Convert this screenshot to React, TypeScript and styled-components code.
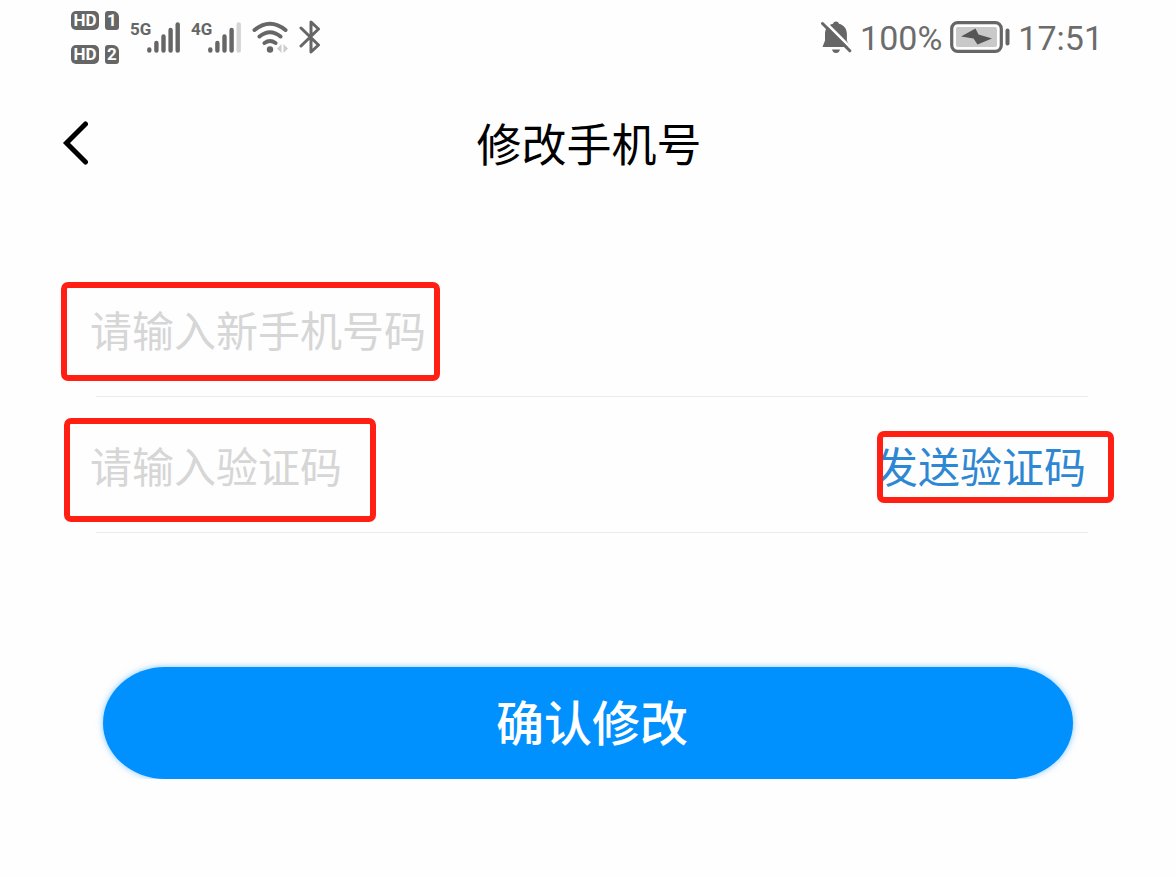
import React from "react";
import styled, { createGlobalStyle } from "styled-components";

const GlobalStyle = createGlobalStyle`
  *, *::before, *::after { box-sizing: border-box; }
  body {
    margin: 0;
    background: #fefefe;
    color: #000;
    font-family: "Noto Sans CJK SC", sans-serif;
  }
  button, input { font-family: inherit; }
`;

const Page = styled.div`
  display: flex;
  flex-direction: column;
`;

const StatusBar = styled.div`
  display: flex;
  justify-content: space-between;
  height: 74px;
  padding: 0 73px 0 71px;
  color: #666;
  font-family: Roboto, sans-serif;
`;

const StatusGroup = styled.div<{ $gap: number }>`
  display: flex;
  align-items: center;
  gap: ${(p) => p.$gap}px;
  svg { display: block; flex: none; }
`;

const SimList = styled.div`
  display: grid;
  gap: 15px;
`;

const SimRow = styled.div`
  display: flex;
  gap: 6px;
`;

const Badge = styled.span<{ $sim?: boolean }>`
  width: ${(p) => (p.$sim ? 14 : 28)}px;
  height: 19px;
  border-radius: ${(p) => (p.$sim ? "3px 6px 3px 3px" : "5px")};
  background: #666;
  color: #fff;
  font-size: 17px;
  font-weight: 700;
  line-height: 19px;
  text-align: center;
`;

const Network = styled.div`
  display: flex;
  align-items: flex-start;
`;

const NetworkType = styled.span`
  width: 17px;
  font-size: 17px;
  font-weight: 700;
  line-height: 14px;
  white-space: nowrap;
`;

const StatusText = styled.span`
  padding-top: 2px;
  color: #6c6c6c;
  font-size: 34px;
  line-height: 40px;
`;

const Header = styled.header`
  display: grid;
  grid-template-columns: 64px 1fr 64px;
  align-items: center;
  height: 138px;
  padding: 0 55px 0 57px;
`;

const BackButton = styled.button`
  display: flex;
  padding: 4px;
  border: 0;
  background: none;
`;

const Title = styled.h1`
  margin: 0;
  font-size: 45px;
  font-weight: 400;
  line-height: 64px;
  text-align: center;
`;

const Form = styled.form`
  display: flex;
  flex-direction: column;
  padding: 49px 88px 0 96px;
`;

const Field = styled.div`
  position: relative;
  display: flex;
  align-items: center;
  height: 136px;
  border-bottom: 1px solid #ebebeb;
`;

const Input = styled.input`
  flex: 1;
  min-width: 0;
  height: 64px;
  margin-left: -6px;
  padding: 0;
  border: 0;
  outline: 0;
  background: transparent;
  color: #333;
  font-size: 42px;
  &::placeholder { color: #d6d6d6; opacity: 1; }
`;

const SendButton = styled.button`
  padding: 0 2px;
  border: 0;
  background: none;
  color: #2d87d3;
  font-size: 42px;
  line-height: 64px;
  white-space: nowrap;
`;

const Mark = styled.span<{ $top: number; $width: number; $height: number; $left?: number; $right?: number }>`
  position: absolute;
  top: ${(p) => p.$top}px;
  ${(p) => (p.$right !== undefined ? `right: ${p.$right}px;` : `left: ${p.$left}px;`)}
  width: ${(p) => p.$width}px;
  height: ${(p) => p.$height}px;
  border: 6px solid #ff2013;
  border-radius: 7px;
  pointer-events: none;
`;

const SubmitButton = styled.button`
  height: 112px;
  margin: 134px 15px 0 7px;
  padding: 0 0 6px 8px;
  border: 0;
  border-radius: 62px / 56px;
  background: #0091ff;
  box-shadow: 0 0 6px rgba(0, 145, 255, 0.5);
  color: #fff;
  font-size: 48px;
  font-weight: 500;
  line-height: 64px;
`;

const Signal = ({ weak }: { weak?: boolean }) => (
  <svg width="33" height="31" viewBox="0 0 33 31" stroke="#666" strokeWidth="4.4" strokeLinecap="round" aria-hidden="true">
    <path d="M2.3 27.5v1M9.4 21v7.5M16.5 14.5v14M23.6 8v20.5" />
    <path d="M30.7 2.5v26" stroke={weak ? "#d4d4d4" : "#666"} />
  </svg>
);

const Wifi = () => (
  <svg width="36" height="33" viewBox="0 0 36 33" fill="none" stroke="#666" strokeWidth="4" strokeLinecap="round" aria-hidden="true">
    <path d="M2.5 9Q18 -3.5 33.5 9M7.5 15.5Q18 7 28.5 15.5M12.500 22Q18 18 23.500 22" />
    <circle cx="18" cy="28.5" r="3.2" fill="#666" stroke="none" />
    <path d="M25 27.500l4.500-4.500v9zM36 27.500l-4.500-4.500v9z" fill="#ccc" stroke="none" />
  </svg>
);

const Bluetooth = () => (
  <svg width="22" height="34" viewBox="0 0 22 34" fill="none" stroke="#666" strokeWidth="3" strokeLinecap="round" strokeLinejoin="round" aria-hidden="true">
    <path d="M2 8L19.5 25L12 32V2L19.5 9L2 26" />
  </svg>
);

const BellOff = () => (
  <svg width="31" height="33" viewBox="0 0 31 33" aria-hidden="true">
    <path d="M15 0.500c1.700 0 2.700 1 2.900 2.200 5.200 1.300 8 5 8 10.300v6.500l3 6.500H1.500L4 19.500V13c0-5.300 2.600-9 8.100-10.300.2-1.200 1.200-2.200 2.900-2.200z" fill="#666" />
    <path d="M11 28.500h8c-.6 2.500-2 3.500-4 3.500s-3.400-1-4-3.500z" fill="#666" />
    <path d="M2 -1L31 28" stroke="#fefefe" strokeWidth="2.800" />
    <path d="M1.500 2.500L28.800 29.800" stroke="#666" strokeWidth="3" strokeLinecap="round" />
  </svg>
);

const Battery = () => (
  <svg width="60" height="32" viewBox="0 0 60 32" aria-hidden="true">
    <rect x="1.7" y="1.7" width="49.6" height="28.6" rx="6" fill="none" stroke="#666" strokeWidth="3.2" />
    <rect x="6" y="6" width="41" height="20" rx="2" fill="#c9c9c9" />
    <path d="M11 15.500L25.500 7.500L28.500 13.500L42 17.500L27.500 23.500L23.500 17.500z" fill="#555" />
    <rect x="55.5" y="7.5" width="4" height="17" rx="2" fill="#666" />
  </svg>
);

export default function App() {
  return (
    <Page>
      <GlobalStyle />
      <StatusBar>
        <StatusGroup $gap={11}>
          <SimList>
            {[1, 2].map((n) => (
              <SimRow key={n}>
                <Badge>HD</Badge>
                <Badge $sim>{n}</Badge>
              </SimRow>
            ))}
          </SimList>
          <Network>
            <NetworkType>5G</NetworkType>
            <Signal />
          </Network>
          <Network>
            <NetworkType>4G</NetworkType>
            <Signal weak />
          </Network>
          <Wifi />
          <Bluetooth />
        </StatusGroup>
        <StatusGroup $gap={8}>
          <BellOff />
          <StatusText>100%</StatusText>
          <Battery />
          <StatusText>17:51</StatusText>
        </StatusGroup>
      </StatusBar>
      <Header>
        <BackButton type="button" aria-label="返回">
          <svg width="32" height="44" viewBox="0 0 32 44" fill="none" stroke="#000" strokeWidth="5" strokeLinecap="round" aria-hidden="true">
            <path d="M24.5 3L5.5 22L24.5 41" />
          </svg>
        </BackButton>
        <Title>修改手机号</Title>
      </Header>
      <Form onSubmit={(e) => e.preventDefault()}>
        <Field>
          <Input type="tel" placeholder="请输入新手机号码" aria-label="新手机号码" />
          <Mark $left={-35} $top={21} $width={379} $height={99} />
        </Field>
        <Field>
          <Input type="text" placeholder="请输入验证码" aria-label="验证码" />
          <SendButton type="button">发送验证码</SendButton>
          <Mark $left={-32} $top={21} $width={312} $height={104} />
          <Mark $right={-26} $top={34} $width={237} $height={72} />
        </Field>
        <SubmitButton type="submit">确认修改</SubmitButton>
      </Form>
    </Page>
  );
}
